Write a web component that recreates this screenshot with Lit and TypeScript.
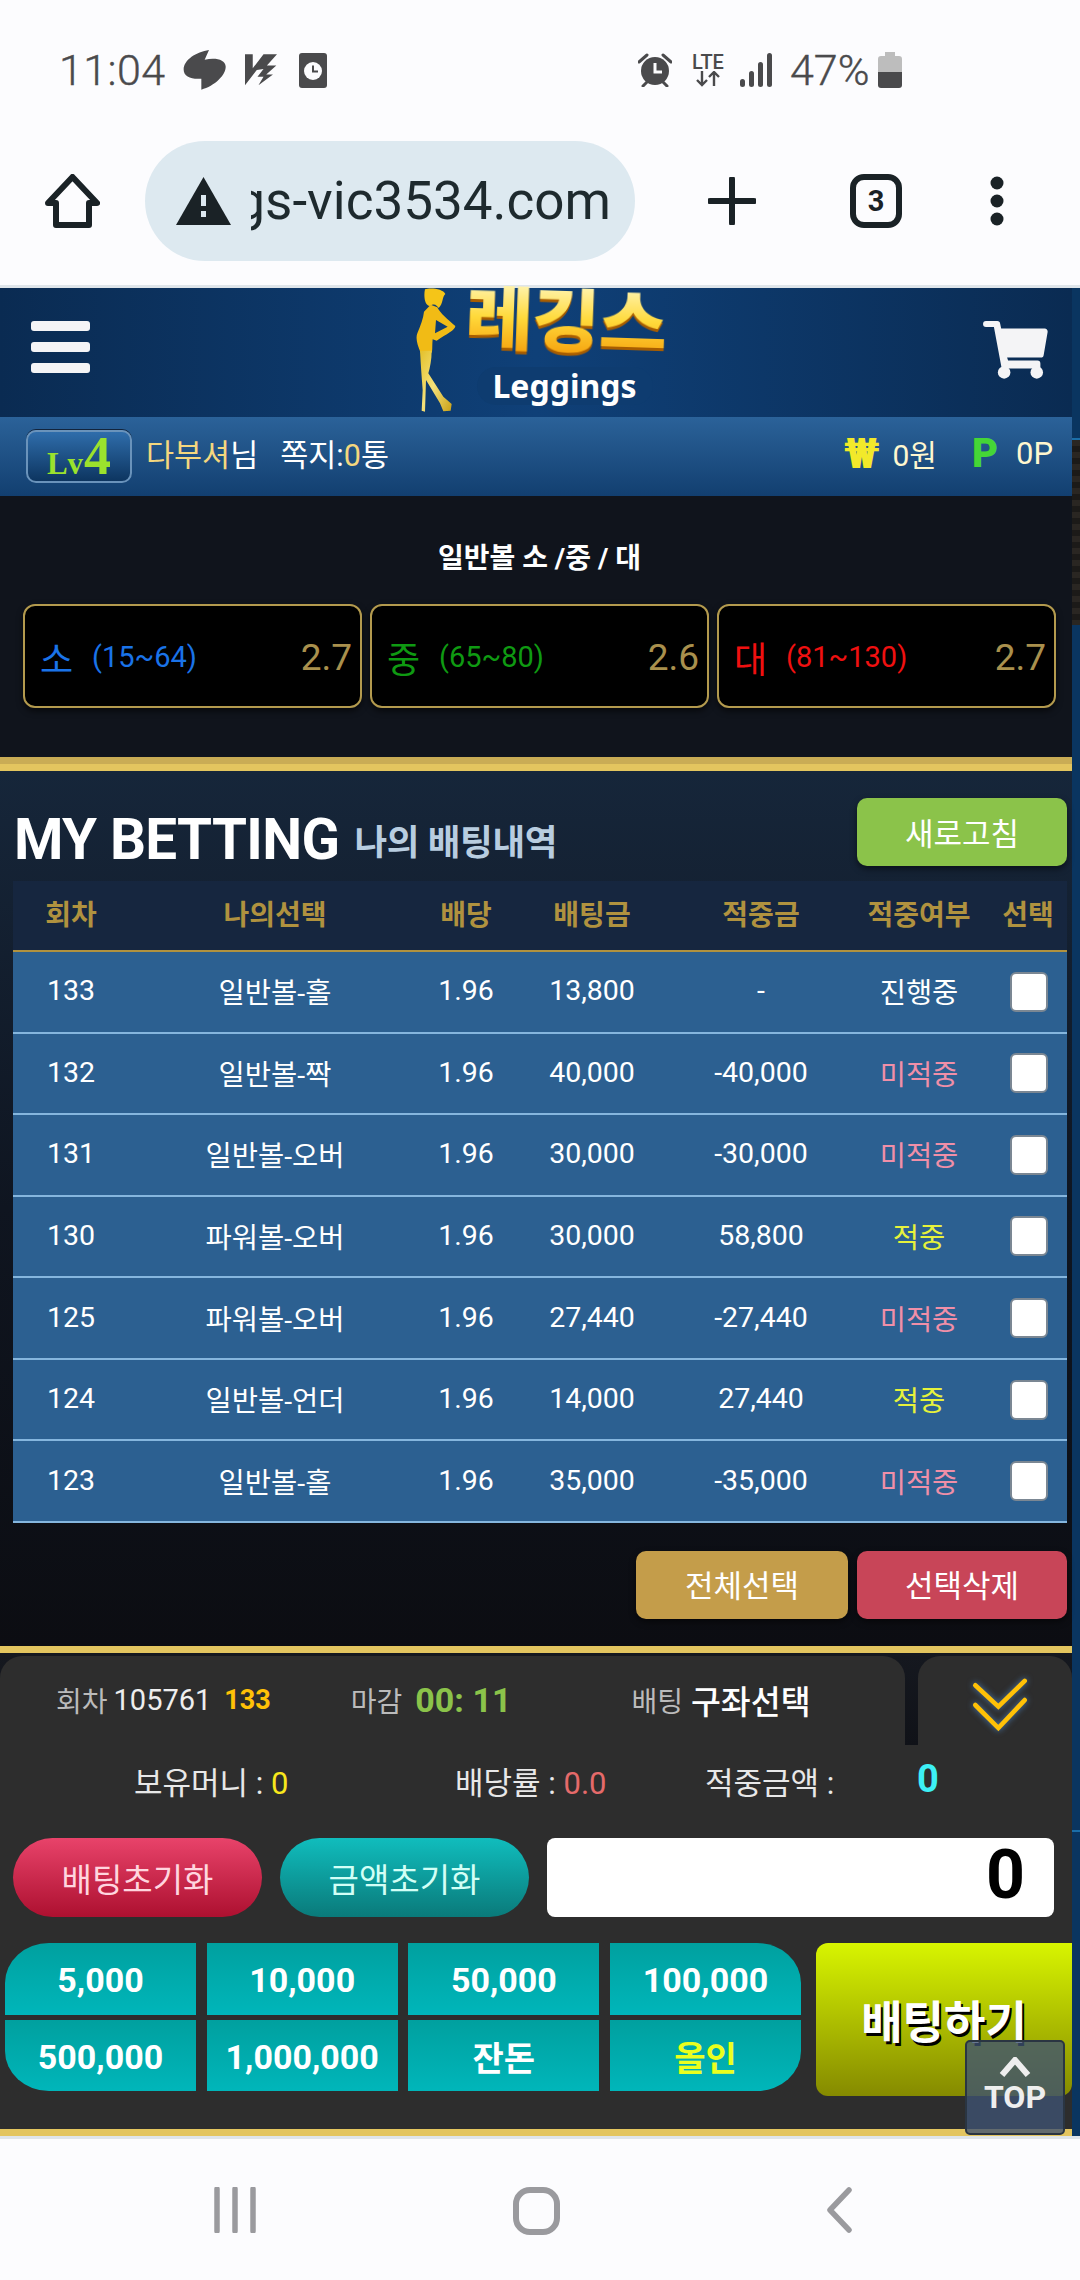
import { LitElement, html, css } from "lit";
import { customElement } from "lit/decorators.js";

const rows = [
  ["133", "일반볼-홀", "1.96", "13,800", "-", "진행중", "run"],
  ["132", "일반볼-짝", "1.96", "40,000", "-40,000", "미적중", "lose"],
  ["131", "일반볼-오버", "1.96", "30,000", "-30,000", "미적중", "lose"],
  ["130", "파워볼-오버", "1.96", "30,000", "58,800", "적중", "win"],
  ["125", "파워볼-오버", "1.96", "27,440", "-27,440", "미적중", "lose"],
  ["124", "일반볼-언더", "1.96", "14,000", "27,440", "적중", "win"],
  ["123", "일반볼-홀", "1.96", "35,000", "-35,000", "미적중", "lose"],
];
const heads = ["회차", "나의선택", "배당", "배팅금", "적중금", "적중여부", "선택"];
const chips = ["5,000", "10,000", "50,000", "100,000", "500,000", "1,000,000", "잔돈", "올인"];
const cards = [
  ["소", "(15~64)", "2.7", "blue"],
  ["중", "(65~80)", "2.6", "green"],
  ["대", "(81~130)", "2.7", "red"],
];

@customElement("app-root")
export class AppRoot extends LitElement {
  static styles = css`
    :host {
      display: block;
      width: 1080px;
      height: 2280px;
      overflow: hidden;
      font-family: Roboto, "Noto Sans CJK KR", sans-serif;
      background: #fcfcfe;
      color: #fff;
    }
    * { box-sizing: border-box; }
    .status {
      height: 116px;
      padding: 24px 0 0 59px;
      display: flex;
      align-items: center;
      color: #4a4a4c;
    }
    .time { font-size: 43px; font-weight: 300; -webkit-text-stroke: .4px #4a4a4c; width: 124px; letter-spacing: .4px; }
    .status svg { display: block; fill: #4a4a4c; flex: none; }
    .ml1 { margin-left: 0; }
    .ml2 { margin-left: 18px; }
    .ml3 { margin-left: 22px; }
    .ml4 { margin-left: 311px; }
    .lte { margin-left: 19px; width: 34px; display: flex; flex-direction: column; align-items: center; }
    .lte b { font-size: 20px; font-weight: 500; line-height: 18px; }
    .sig { margin-left: 15px; }
    .pct { font-size: 43px; font-weight: 300; -webkit-text-stroke: .4px #4a4a4c; margin-left: 18px; width: 88px; }
    .toolbar {
      height: 172px;
      border-bottom: 3px solid #dfe5ea;
      display: flex;
      align-items: center;
      padding-left: 45px;
      color: #1a2226;
    }
    .toolbar > svg { flex: none; display: block; }
    .url {
      width: 490px;
      height: 120px;
      margin-left: 45px;
      margin-right: 73px;
      border-radius: 60px;
      background: #dde9f0;
      display: flex;
      align-items: center;
      padding-left: 31px;
    }
    .url-text {
      width: 360px;
      margin-left: 20px;
      overflow: hidden;
      display: flex;
      justify-content: flex-end;
      font-size: 53px;
      line-height: 70px;
      white-space: nowrap;
      color: #1e2a2e;
    }
    .tabs { margin-left: 94px; }
    .dots { margin-left: 88px; }
    .web { height: 1848px; display: flex; }
    .main { width: 1072px; position: relative; display: flex; flex-direction: column; flex: none; }
    .strip { width: 8px; display: flex; flex-direction: column; background: #0a3560; }
    .s1 { height: 152px; border-bottom: 2px solid #1b6ea8; }
    .s2 { height: 185px; background: repeating-linear-gradient(#2a2622 0 6px, #1c1a18 6px 12px); }
    .s3 { height: 1207px; border-bottom: 2px solid #1b6ea8; }
    .header {
      height: 129px;
      flex: none;
      display: flex;
      background: linear-gradient(90deg, #0a2b52, #0f4078 50%, #0a2b52);
      padding-left: 31px;
    }
    .burger { width: 59px; padding-top: 33px; display: flex; flex-direction: column; gap: 11px; }
    .burger i { display: block; height: 10px; border-radius: 3px; background: #f4f4f6; }
    .logo { margin-left: 326px; display: flex; width: 260px; }
    .logo svg { display: block; flex: none; }
    .brand { margin-left: 10px; display: flex; flex-direction: column; align-items: center; width: 200px; }
    .ko {
      font-size: 69px;
      font-weight: 900;
      line-height: 70px;
      letter-spacing: -1px;
      white-space: nowrap;
      background: linear-gradient(#fff2a8, #ffd93a 45%, #f59d0a);
      -webkit-background-clip: text;
      background-clip: text;
      color: transparent;
      filter: drop-shadow(0 3px 0 #a85d00);
      transform: scaleX(1.07) rotate(2deg);
    }
    .en {
      margin-top: 9px;
      margin-left: -3px;
      width: 176px;
      height: 38px;
      border-radius: 20px;
      background: #0e3c70;
      text-align: center;
      font: 700 32px/38px "Noto Sans", sans-serif;
      white-space: nowrap;
    }
    .cart { margin-left: auto; margin-right: 24px; margin-top: 33px; display: block; }
    .userbar {
      height: 79px;
      flex: none;
      background: linear-gradient(#2b6299, #123f70);
      display: flex;
      align-items: center;
      padding: 0 19px 0 26px;
      font-size: 30.5px;
    }
    .lv {
      width: 106px;
      height: 53px;
      border: 2px solid #6a93bb;
      border-radius: 10px;
      background: linear-gradient(#2f6dab, #0d3560);
      box-shadow: 0 -1px 0 #12243c;
      display: flex;
      align-items: baseline;
      justify-content: center;
      gap: 1px;
      color: #9be22d;
      font-family: "Liberation Serif", serif;
      font-weight: 700;
      font-size: 31px;
      line-height: 49px;
    }
    .lv b { font-size: 54px; }
    .name { margin-left: 14px; margin-top: -7px; }
    .gold { color: #f4d77e; }
    .msg { margin-left: 22px; margin-top: -7px; }
    .right { margin-left: auto; margin-top: -7px; display: flex; align-items: center; }
    .won { color: #f2e92a; font-weight: 900; font-size: 42px; letter-spacing: -1px; }
    .zero { margin-left: 14px; color: #fff7cf; font-size: 30px; }
    .pt { margin-left: 35px; color: #45d637; font-weight: 900; font-size: 40px; }
    .zp { margin-left: 18px; color: #fff7cf; font-size: 31px; }
    .game {
      height: 261px;
      flex: none;
      background: #10141c;
      padding: 44px 0 0 23px;
    }
    .game h2 {
      margin: 0;
      width: 1033px;
      text-align: center;
      font-size: 28px;
      font-weight: 700;
      line-height: 38px;
    }
    .cards { margin-top: 26px; display: grid; grid-template-columns: 339px 339px 339px; column-gap: 8px; }
    .card {
      height: 104px;
      border: 2px solid #b39a4e;
      border-radius: 12px;
      background: #000;
      box-shadow: 0 3px 6px rgba(0,0,0,.6);
      display: flex;
      align-items: center;
      padding: 2px 8px 0 15px;
    }
    .card .k { font-size: 36px; width: 52px; }
    .card .r { font-size: 29px; }
    .card .o { margin-left: auto; font-size: 37px; color: #a9904d; }
    .blue { color: #1a73e8; }
    .green { color: #0f9a12; }
    .red { color: #f01010; }
    .goldbar { flex: none; height: 14px; background: linear-gradient(#c9ac55 0 50%, #e3c55f 50%); }
    .goldbar.thin { height: 7px; background: #e3c55f; }
    .bet {
      height: 875px;
      flex: none;
      background: linear-gradient(#16263a, #0f1520 50%, #0c0d12);
      padding: 27px 5px 0 13px;
    }
    .bet-top { display: flex; align-items: flex-end; justify-content: space-between; }
    .heading { display: flex; align-items: baseline; gap: 15px; padding-left: 1px; transform: translateY(3px); }
    .heading b { font-size: 56.5px; line-height: 56px; font-weight: 700; letter-spacing: -.6px; }
    .heading span { font-size: 35.5px; font-weight: 700; color: #b8cde0; letter-spacing: -.3px; transform: translateY(-4px); }
    .btn {
      width: 210px;
      height: 68px;
      border-radius: 10px;
      box-shadow: 0 3px 6px rgba(0,0,0,.5);
      display: flex;
      align-items: center;
      justify-content: center;
      font-size: 31px;
      padding-bottom: 2px;
      color: #fff;
    }
    .refresh { background: #8bc34a; }
    .all { background: #c49d4a; width: 212px; }
    .del { background: #c84558; }
    .table { margin-top: 15px; }
    .tr {
      display: grid;
      grid-template-columns: 116px 292px 90px 162px 176px 140px 78px;
      align-items: center;
      text-align: center;
    }
    .thead {
      height: 71px;
      background: #16263f;
      border-bottom: 2px solid #b0923f;
      color: #b0923f;
      font-size: 28px;
      font-weight: 700;
      padding-bottom: 5px;
    }
    .row {
      height: 81.57px;
      background: #2c6091;
      border-bottom: 2px solid #85b6de;
      font-size: 28.5px;
      padding-bottom: 2px;
    }
    .lose { color: #f08fa8; }
    .win { color: #e6f23c; }
    .check {
      width: 38px;
      height: 40px;
      margin: 2px auto 0 21px;
      background: #fff;
      border: 2px solid #7b8793;
      border-radius: 6px;
    }
    .ops { margin-top: 28px; display: flex; justify-content: flex-end; gap: 9px; }
    .gap { height: 3px; flex: none; background: #15181f; }
    .panel { flex: 1; min-height: 0; background: #2d2d2d; display: flex; flex-direction: column; }
    .tabsrow { height: 89px; flex: none; display: flex; background: linear-gradient(#15181f, #101218); }
    .tab1 {
      width: 905px;
      background: #2d2d2d;
      border-radius: 22px 22px 0 0;
      display: flex;
      align-items: center;
      padding: 0 0 2px 56px;
      font-size: 28px;
      color: #bbb;
      white-space: nowrap;
    }
    .tab1 .num { margin-left: 6px; color: #eee; font-size: 29px; }
    .tab1 .cnt { margin-left: 13px; color: #ffc107; font-weight: 700; font-size: 27px; }
    .tab1 .close { margin-left: 80px; }
    .tab1 .clock { margin-left: 13px; color: #8bc34a; font-weight: 700; font-size: 34px; }
    .tab1 .acc { margin-left: 120px; }
    .tab1 .sel { margin-left: 8px; color: #fff; font-size: 32.5px; font-weight: 500; }
    .tab2 {
      width: 154px;
      margin-left: 13px;
      background: #2d2d2d;
      border-radius: 22px 22px 0 0;
      padding: 21px 0 0 54px;
    }
    .tab2 svg { display: block; filter: drop-shadow(0 0 3px #4a7ab0); }
    .info {
      height: 93px;
      flex: none;
      display: grid;
      grid-template-columns: 321px 250px 212px auto;
      padding: 0 0 23px 134px;
      align-items: center;
      font-size: 31px;
      color: #e8e8e8;
    }
    .yel { color: #f8e71c; }
    .sal { color: #e56a6a; }
    .cy { color: #3df0f5; font-weight: 700; font-size: 38px; margin-top: -2px; }
    .actions { height: 79px; flex: none; display: flex; padding-left: 13px; }
    .pill {
      width: 249px;
      border-radius: 40px;
      display: flex;
      align-items: center;
      justify-content: center;
      font-size: 33px;
    }
    .pill.a { background: linear-gradient(#e8436a, #ad1030); color: #ffd5df; }
    .pill.b { margin-left: 18px; background: linear-gradient(#10bdbd, #0a7a7a); color: #d2fff6; }
    .amount {
      margin-left: 18px;
      width: 507px;
      border-radius: 8px;
      background: #fff;
      color: #000;
      font-size: 68px;
      font-weight: 700;
      line-height: 75px;
      text-align: right;
      padding-right: 29px;
    }
    .betrow { margin-top: 26px; display: flex; padding-left: 5px; align-items: flex-start; }
    .chips { display: grid; grid-template-columns: repeat(4, 191px); grid-template-rows: 72px 71px; gap: 5px 10.7px; }
    .chip {
      background: linear-gradient(#00a09f, #00b6ba);
      display: flex;
      align-items: center;
      justify-content: center;
      font-size: 34px;
      font-weight: 700;
      padding-top: 2px;
    }
    .c0 { border-top-left-radius: 44px 40px; }
    .c3 { border-top-right-radius: 44px 40px; }
    .c4 { border-bottom-left-radius: 44px 40px; }
    .c7 { border-bottom-right-radius: 44px 40px; color: #eaff1e; }
    .go {
      margin-left: 15px;
      width: 256px;
      height: 153px;
      border-radius: 12px 0 12px 12px;
      background: linear-gradient(#d8f500, #858a00);
      display: flex;
      align-items: center;
      justify-content: center;
      font-size: 45px;
      font-weight: 700;
      text-shadow: 2px 3px 0 #000;
    }
    .top {
      position: absolute;
      right: 7px;
      bottom: 1px;
      width: 100px;
      height: 95px;
      border: 2px solid #2a3542;
      border-radius: 5px;
      background: rgba(62, 82, 114, .78);
      display: flex;
      flex-direction: column;
      align-items: center;
      padding-top: 15px;
      font-size: 32px;
      font-weight: 700;
      line-height: 38px;
      color: #eee;
    }
    .top svg { display: block; margin-bottom: 1px; }
    .nav {
      height: 144px;
      border-top: 3px solid #dfe5ea;
      display: flex;
      align-items: flex-start;
      padding: 48px 0 0 214px;
    }
    .nav svg { display: block; flex: none; }
    .nh { margin-left: 257px; }
    .nb { margin-left: 266px; }
  `;

  private woman() {
    return html`<svg width="40" height="124" viewBox="108 24 120 372">
      <defs><linearGradient id="lg" x1="0" y1="0" x2="1" y2="1"><stop offset="0" stop-color="#e3c02a"/><stop offset=".5" stop-color="#f6e27a"/><stop offset="1" stop-color="#c9a016"/></linearGradient></defs>
      <path fill="#f5c518" d="M135 28C150 22 190 26 196 42C186 50 190 72 176 84C170 78 165 68 150 78C135 78 130 50 135 28Z"/>
      <path fill="#f1bb15" fill-rule="evenodd" d="M152 74L172 82C180 100 205 120 226 138C226 150 200 162 170 182L158 178C156 200 158 210 155 218L122 218C112 195 106 175 112 160C122 135 130 115 132 95ZM168 120L165 160L203 140Z"/>
      <path fill="url(#lg)" d="M120 212L155 212C155 240 150 262 145 280L190 350L215 372L212 392L190 394L180 370L138 300L135 395L125 392L128 330C125 290 122 250 120 212Z"/>
    </svg>`;
  }

  render() {
    return html`
      <div class="status">
        <span class="time">11:04</span>
        <svg class="ml1" width="44" height="40" viewBox="402 36 128 120"><path d="M478 36C440 42 402 65 402 95C402 115 425 125 455 122L455 155C495 145 530 110 528 85C526 65 500 58 465 65Z"/></svg>
        <svg class="ml2" width="32" height="32" viewBox="585 48 95 94"><path d="M585 48L608 48L608 90L640 48L680 48L650 82L678 82L648 108L668 108L625 140L640 115L622 115L640 92L620 95L585 140Z"/></svg>
        <svg class="ml3" width="28" height="35" viewBox="0 0 28 35"><rect width="28" height="35" rx="3"/><circle cx="14" cy="18" r="9" fill="#fcfcfe"/><path d="M14 12.5V18.5H19" fill="none" stroke="#4a4a4c" stroke-width="2"/></svg>
        <svg class="ml4" width="34" height="34" viewBox="0 0 34 34"><circle cx="17" cy="18" r="14"/><path d="M17 10V19H24" fill="none" stroke="#fcfcfe" stroke-width="3"/><path d="M1 9L9 2M33 9L25 2M5 33L9 29M29 33L25 29" stroke="#4a4a4c" stroke-width="3" stroke-linecap="round"/></svg>
        <div class="lte"><b>LTE</b><svg width="26" height="16" viewBox="0 0 26 16"><path d="M7 0V14M2 9L7 14L12 9M19 15V1M14 6L19 1L24 6" fill="none" stroke="#4a4a4c" stroke-width="2.4"/></svg></div>
        <svg class="sig" width="32" height="34" viewBox="0 0 32 34"><rect y="26" width="5" height="8" rx="2.5"/><rect x="9" y="18" width="5" height="16" rx="2.5"/><rect x="18" y="9" width="5" height="25" rx="2.5"/><rect x="27" y="0" width="5" height="34" rx="2.5"/></svg>
        <span class="pct">47%</span>
        <svg width="24" height="36" viewBox="0 0 24 36"><path fill="#bdbdbd" d="M7 0H17V4H21A3 3 0 0 1 24 7V20H0V7A3 3 0 0 1 3 4H7Z"/><path d="M0 20H24V33A3 3 0 0 1 21 36H3A3 3 0 0 1 0 33Z"/></svg>
      </div>

      <div class="toolbar">
        <svg width="55" height="54" viewBox="0 0 55 54"><path d="M27.5 3L52 29H44V51H11V29H3Z" fill="none" stroke="#1a2226" stroke-width="6" stroke-linejoin="round"/></svg>
        <div class="url">
          <svg width="55" height="48" viewBox="0 0 55 48"><path fill="#1a2226" d="M27.5 0L55 48H0Z"/><rect x="25" y="18" width="5" height="11" fill="#dde9f0"/><rect x="25" y="34" width="5" height="6" fill="#dde9f0"/></svg>
          <div class="url-text"><span>leggs-vic3534.com</span></div>
        </div>
        <svg width="48" height="48" viewBox="0 0 48 48"><path d="M24 2V46M2 24H46" stroke="#1a2226" stroke-width="6" stroke-linecap="round"/></svg>
        <svg class="tabs" width="52" height="54" viewBox="0 0 52 54"><rect x="3" y="3" width="46" height="48" rx="11" fill="none" stroke="#1a2226" stroke-width="6"/><text x="26" y="37" text-anchor="middle" font-size="29" font-weight="700" font-family="Roboto, sans-serif" fill="#1a2226">3</text></svg>
        <svg class="dots" width="14" height="50" viewBox="0 0 14 50"><circle cx="7" cy="7" r="6.5" fill="#1a2226"/><circle cx="7" cy="25" r="6.5" fill="#1a2226"/><circle cx="7" cy="43" r="6.5" fill="#1a2226"/></svg>
      </div>

      <div class="web">
        <div class="main">
          <div class="header">
            <div class="burger"><i></i><i></i><i></i></div>
            <div class="logo">
              ${this.woman()}
              <div class="brand"><div class="ko">레깅스</div><div class="en">Leggings</div></div>
            </div>
            <svg class="cart" width="65" height="58" viewBox="130 92 195 176"><path fill="#f4f4f6" d="M138 92H172A9 9 0 0 1 181 100L184 115H316A9 9 0 0 1 325 125L313 195A9 9 0 0 1 304 203H202L205 212H294A9 9 0 0 1 303 221V236H193A9 9 0 0 1 184 228L162 110H138A9 9 0 0 1 138 92Z"/><circle cx="193" cy="248" r="19" fill="#f4f4f6"/><circle cx="292" cy="248" r="19" fill="#f4f4f6"/></svg>
          </div>

          <div class="userbar">
            <div class="lv">Lv<b>4</b></div>
            <span class="name"><span class="gold">다부셔</span>님</span>
            <span class="msg">쪽지:<span class="gold">0</span>통</span>
            <div class="right">
              <span class="won">₩</span><span class="zero">0원</span>
              <span class="pt">P</span><span class="zp">0P</span>
            </div>
          </div>

          <div class="game">
            <h2>일반볼 소 /중 / 대</h2>
            <div class="cards">
              ${cards.map(c => html`<div class="card"><span class="k ${c[3]}">${c[0]}</span><span class="r ${c[3]}">${c[1]}</span><span class="o">${c[2]}</span></div>`)}
            </div>
          </div>
          <div class="goldbar"></div>

          <div class="bet">
            <div class="bet-top">
              <div class="heading"><b>MY BETTING</b><span>나의 배팅내역</span></div>
              <div class="btn refresh">새로고침</div>
            </div>
            <div class="table">
              <div class="tr thead">${heads.map(h => html`<div>${h}</div>`)}</div>
              ${rows.map(r => html`<div class="tr row">
                <div>${r[0]}</div><div>${r[1]}</div><div>${r[2]}</div><div>${r[3]}</div><div>${r[4]}</div>
                <div class="${r[6]}">${r[5]}</div><div class="check"></div>
              </div>`)}
            </div>
            <div class="ops"><div class="btn all">전체선택</div><div class="btn del">선택삭제</div></div>
          </div>

          <div class="goldbar thin"></div>
          <div class="gap"></div>
          <div class="panel">
            <div class="tabsrow">
              <div class="tab1">
                <span>회차</span><span class="num">105761</span><span class="cnt">133</span>
                <span class="close">마감</span><span class="clock">00: 11</span>
                <span class="acc">배팅</span><span class="sel">구좌선택</span>
              </div>
              <div class="tab2"><svg width="56" height="56" viewBox="95 80 170 170"><path d="M105 105L175 170L255 92M105 165L175 235L255 150" fill="none" stroke="#ffc107" stroke-width="14" stroke-linecap="round"/></svg></div>
            </div>
            <div class="info">
              <div>보유머니 : <span class="yel">0</span></div>
              <div>배당률 : <span class="sal">0.0</span></div>
              <div>적중금액 :</div>
              <div class="cy">0</div>
            </div>
            <div class="actions">
              <div class="pill a">배팅초기화</div>
              <div class="pill b">금액초기화</div>
              <div class="amount">0</div>
            </div>
            <div class="betrow">
              <div class="chips">${chips.map((c, i) => html`<div class="chip c${i}">${c}</div>`)}</div>
              <div class="go">배팅하기</div>
            </div>
          </div>
          <div class="goldbar thin"></div>
          <div class="top">
            <svg width="32" height="20" viewBox="0 0 32 20"><path d="M3 18L16 3L29 18" fill="none" stroke="#eee" stroke-width="6"/></svg>
            TOP
          </div>
        </div>
        <div class="strip"><div class="s1"></div><div class="s2"></div><div class="s3"></div></div>
      </div>

      <div class="nav">
        <svg width="42" height="46" viewBox="0 0 42 46"><path d="M3 2V44M21 2V44M39 2V44" stroke="#9a9a9e" stroke-width="5.5" stroke-linecap="round"/></svg>
        <svg class="nh" width="47" height="48" viewBox="0 0 47 48"><rect x="3" y="3" width="41" height="42" rx="14" fill="none" stroke="#9a9a9e" stroke-width="6"/></svg>
        <svg class="nb" width="26" height="46" viewBox="0 0 26 46"><path d="M23 3L4 23L23 43" fill="none" stroke="#9a9a9e" stroke-width="5.5" stroke-linecap="round" stroke-linejoin="round"/></svg>
      </div>
    `;
  }
}
